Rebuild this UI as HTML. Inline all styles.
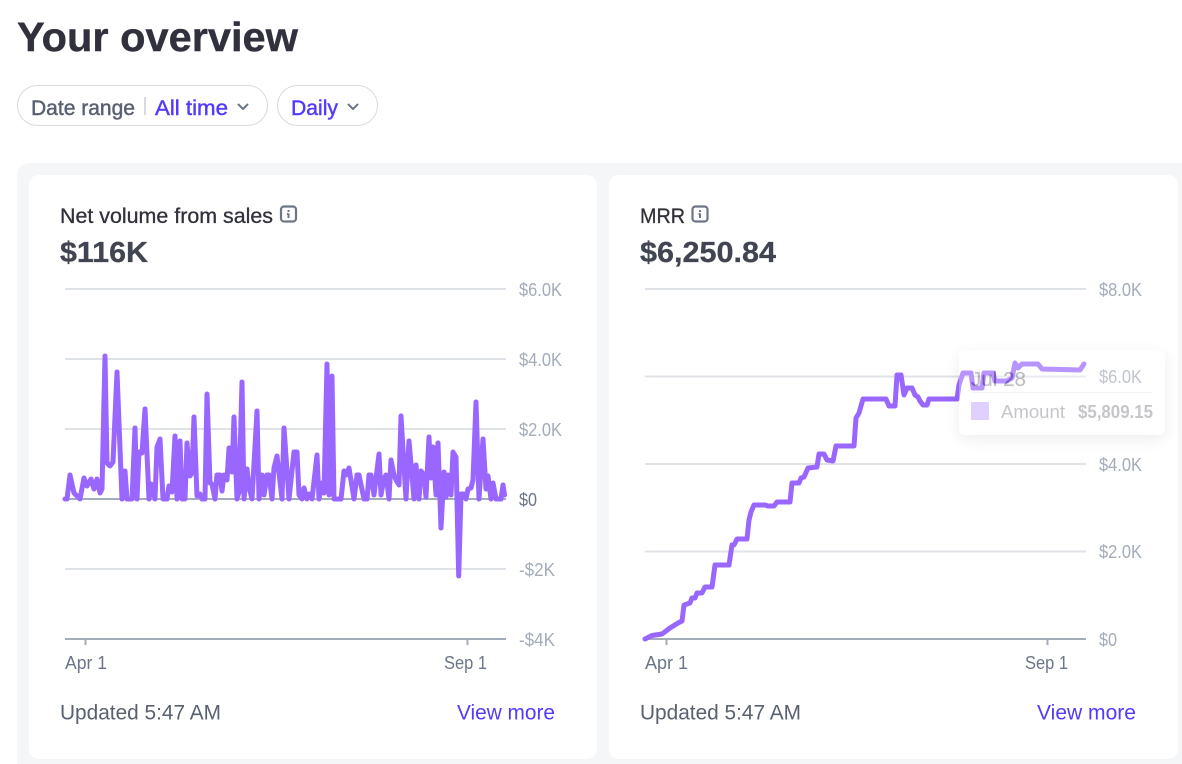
<!DOCTYPE html>
<html lang="en">
<head>
<meta charset="utf-8">
<title>Your overview</title>
<style>
html,body{margin:0;padding:0;background:#fff;width:1182px;height:764px;overflow:hidden}
svg{display:block}
text{font-family:"Liberation Sans",sans-serif}
</style>
</head>
<body>
<svg width="1182" height="764" viewBox="0 0 1182 764" xmlns="http://www.w3.org/2000/svg">
  <text x="17" y="51" font-size="41" font-weight="700" fill="#30313d" stroke="#30313d" stroke-width=".4" textLength="281" lengthAdjust="spacingAndGlyphs">Your overview</text>

  <rect x="17.5" y="85.5" width="250" height="40" rx="20" fill="#fff" stroke="#d5dbe1"/>
  <rect x="277.5" y="85.5" width="100" height="40" rx="20" fill="#fff" stroke="#d5dbe1"/>
  <text x="31" y="115" font-size="21" fill="#596171" stroke="#596171" stroke-width=".45" textLength="104" lengthAdjust="spacingAndGlyphs">Date range</text>
  <rect x="144" y="97" width="2" height="18" fill="#d5dbe1"/>
  <text x="155" y="115" font-size="21" fill="#533afd" stroke="#533afd" stroke-width=".45" textLength="73" lengthAdjust="spacingAndGlyphs">All time</text>
  <path d="M238.500 104.500l4.500 4.500 4.500-4.500" fill="none" stroke="#6c7688" stroke-width="2" stroke-linecap="round" stroke-linejoin="round"/>
  <text x="291" y="115" font-size="21" fill="#533afd" stroke="#533afd" stroke-width=".45" textLength="47" lengthAdjust="spacingAndGlyphs">Daily</text>
  <path d="M348.500 104.500l4.500 4.500 4.500-4.500" fill="none" stroke="#6c7688" stroke-width="2" stroke-linecap="round" stroke-linejoin="round"/>

  <path d="M1182 163H29a12 12 0 0 0-12 12V764H1182Z" fill="#f5f6f8"/>
  <rect x="29" y="175" width="568" height="584" rx="10" fill="#fff"/>
  <rect x="609" y="175" width="569" height="584" rx="10" fill="#fff"/>

  <!-- Card 1 -->
  <text x="60" y="223" font-size="21" fill="#30313d" stroke="#30313d" stroke-width=".3" textLength="213" lengthAdjust="spacingAndGlyphs">Net volume from sales</text>
  <rect x="281" y="206.500" width="15" height="15" rx="3" fill="none" stroke="#6c7688" stroke-width="2.200"/>
  <path d="M288.500 210v2M288.500 213.500v4.500M287 214h1.500" fill="none" stroke="#6c7688" stroke-width="2"/>
  <text x="60" y="262" font-size="29" font-weight="700" fill="#414552" stroke="#414552" stroke-width=".3" textLength="88" lengthAdjust="spacingAndGlyphs">$116K</text>

  <g stroke="#dfe3e8" stroke-width="2">
    <path d="M65 289H506M65 359H506M65 429H506M65 569H506"/>
  </g>
  <path d="M65 499H506" stroke="#a3acba" stroke-width="2"/>
  <path d="M65 639H506M85.500 639V645M467.500 639V645" stroke="#a3acba" stroke-width="2" fill="none"/>
  <g font-size="18.500" fill="#a3acba">
    <text x="519" y="296" textLength="43" lengthAdjust="spacingAndGlyphs">$6.0K</text>
    <text x="519" y="366" textLength="43" lengthAdjust="spacingAndGlyphs">$4.0K</text>
    <text x="519" y="436" textLength="43" lengthAdjust="spacingAndGlyphs">$2.0K</text>
    <text x="519" y="506" fill="#6c7688" textLength="18" lengthAdjust="spacingAndGlyphs">$0</text>
    <text x="519" y="576" textLength="36" lengthAdjust="spacingAndGlyphs">-$2K</text>
    <text x="519" y="646" textLength="36" lengthAdjust="spacingAndGlyphs">-$4K</text>
  </g>
  <text x="65" y="669" font-size="18" fill="#6c7688" textLength="42" lengthAdjust="spacingAndGlyphs">Apr 1</text>
  <text x="444" y="669" font-size="18" fill="#6c7688" textLength="43" lengthAdjust="spacingAndGlyphs">Sep 1</text>
  <text x="60" y="719.500" font-size="21" fill="#596171" textLength="161" lengthAdjust="spacingAndGlyphs">Updated 5:47 AM</text>
  <text x="457" y="719.500" font-size="21" fill="#533afd" textLength="98" lengthAdjust="spacingAndGlyphs">View more</text>

  <polyline fill="none" stroke="#9966ff" stroke-width="5" stroke-linejoin="round" stroke-linecap="round" points="65,499 67,499 70,475 74,493 77,496 80,499 84,478 87,486 91,479 94,489 97,479 100,493 102,489 105,356 107,463 110,466 113,462 117,372 122,499 125,471 127,499 132,499 135,428 137,499 139,452 142,453 145,409 149,499 151,484 155,499 157,447 160,439 163,499 167,499 169,486 172,492 175,436 177,499 180,441 182,499 185,499 187,443 190,476 192,473 194,417 197,496 200,494 202,499 205,499 207,394 210,483 212,484 215,499 217,475 220,475 222,491 224,475 227,480 229,448 232,472 234,417 237,499 239,492 242,382 244,499 247,469 249,487 252,499 257,411 259,499 262,475 264,495 267,475 269,475 272,499 274,468 277,456 279,473 282,499 284,428 289,499 294,452 297,452 299,495 302,499 304,488 307,499 309,494 312,499 317,455 319,499 322,483 324,493 327,364 329,495 332,376 334,499 341,499 344,471 346,475 349,468 354,499 357,475 359,475 364,499 367,499 369,475 371,475 374,495 379,454 381,495 384,478 386,475 389,499 391,460 394,475 396,480 399,485 401,416 406,499 409,441 414,499 416,465 419,499 421,471 424,475 426,497 429,437 431,478 433,447 436,495 438,443 441,528 444,472 446,497 448,475 451,495 453,452 456,457 458.700,576 461,494 464,494 466,499 468,489 471,488 473,480 476,402 479,499 483,439 486,489 488,476 491,499 493,483 496,499 501,499 503,485 504.500,495"/>

  <!-- Card 2 -->
  <text x="640" y="223" font-size="21" fill="#30313d" stroke="#30313d" stroke-width=".3" textLength="45" lengthAdjust="spacingAndGlyphs">MRR</text>
  <rect x="692.500" y="206.500" width="15" height="15" rx="3" fill="none" stroke="#6c7688" stroke-width="2.200"/>
  <path d="M700 210v2M700 213.500v4.500M698.500 214h1.500" fill="none" stroke="#6c7688" stroke-width="2"/>
  <text x="640" y="262" font-size="29" font-weight="700" fill="#414552" stroke="#414552" stroke-width=".3" textLength="136" lengthAdjust="spacingAndGlyphs">$6,250.84</text>

  <g stroke="#dfe3e8" stroke-width="2">
    <path d="M645 289H1086M645 376.500H1086M645 464H1086M645 551.500H1086"/>
  </g>
  <path d="M645 639H1086M666.500 639V645M1047.500 639V645" stroke="#a3acba" stroke-width="2" fill="none"/>
  <g font-size="18.500" fill="#a3acba">
    <text x="1099" y="296" textLength="43" lengthAdjust="spacingAndGlyphs">$8.0K</text>
    <text x="1099" y="383" textLength="43" lengthAdjust="spacingAndGlyphs">$6.0K</text>
    <text x="1099" y="471" textLength="43" lengthAdjust="spacingAndGlyphs">$4.0K</text>
    <text x="1099" y="558" textLength="43" lengthAdjust="spacingAndGlyphs">$2.0K</text>
    <text x="1099" y="646" textLength="18" lengthAdjust="spacingAndGlyphs">$0</text>
  </g>
  <text x="645" y="669" font-size="18" fill="#6c7688" textLength="43" lengthAdjust="spacingAndGlyphs">Apr 1</text>
  <text x="1025" y="669" font-size="18" fill="#6c7688" textLength="43" lengthAdjust="spacingAndGlyphs">Sep 1</text>
  <text x="640" y="719.500" font-size="21" fill="#596171" textLength="161" lengthAdjust="spacingAndGlyphs">Updated 5:47 AM</text>
  <text x="1037" y="719.500" font-size="21" fill="#533afd" textLength="99" lengthAdjust="spacingAndGlyphs">View more</text>

  <polyline fill="none" stroke="#9966ff" stroke-width="5" stroke-linejoin="round" stroke-linecap="round" points="645,639 652,635.500 662,634 670,628 678,623 682,621 684,605 690,603 692,598 695,598 697,593 702,593 705,587 712,587 715,565 729,565 732,545 734,545 737,539 747,539 749,520 751,512 754,505 765,505 768,506 774,506 777,502 790,502 792,483 799,483 801,478 804,477 808,468 817,467 819,454 824,454 827,460 833,461 836,446 854,446 856,418 859,413 863,399 886,399 889,406 895,406 897,375 901,375 904,395 907,388 912,388 915,395 918,397 920,401 923,405 927,405 929,399 957,399 959,385 963,373 971,373 973,388 982,388 984,373 993,373 995,381 1007,381 1012,378 1015,363 1018,368 1022,364 1038,364 1042,369 1080,370 1084,364"/>

  <!-- Fading tooltip -->
  <defs>
    <filter id="s" x="-20%" y="-30%" width="140%" height="170%">
      <feDropShadow dx="0" dy="4" stdDeviation="8" flood-color="#000" flood-opacity=".25"/>
    </filter>
  </defs>
  <g opacity=".3">
    <rect x="959" y="350" width="206" height="85" rx="6" fill="#fff" filter="url(#s)"/>
    <text x="971" y="386" font-size="20" fill="#30313d" stroke="#30313d" stroke-width=".2" textLength="55" lengthAdjust="spacingAndGlyphs">Jul 28</text>
    <rect x="971" y="392" width="182" height="1" fill="#d5dbe1"/>
    <rect x="971" y="402" width="18" height="18" fill="#9966ff"/>
    <text x="1001" y="418" font-size="18" fill="#414552" textLength="64" lengthAdjust="spacingAndGlyphs">Amount</text>
    <text x="1078" y="418" font-size="18" font-weight="700" fill="#414552" textLength="75" lengthAdjust="spacingAndGlyphs">$5,809.15</text>
  </g>
</svg>
</body>
</html>
